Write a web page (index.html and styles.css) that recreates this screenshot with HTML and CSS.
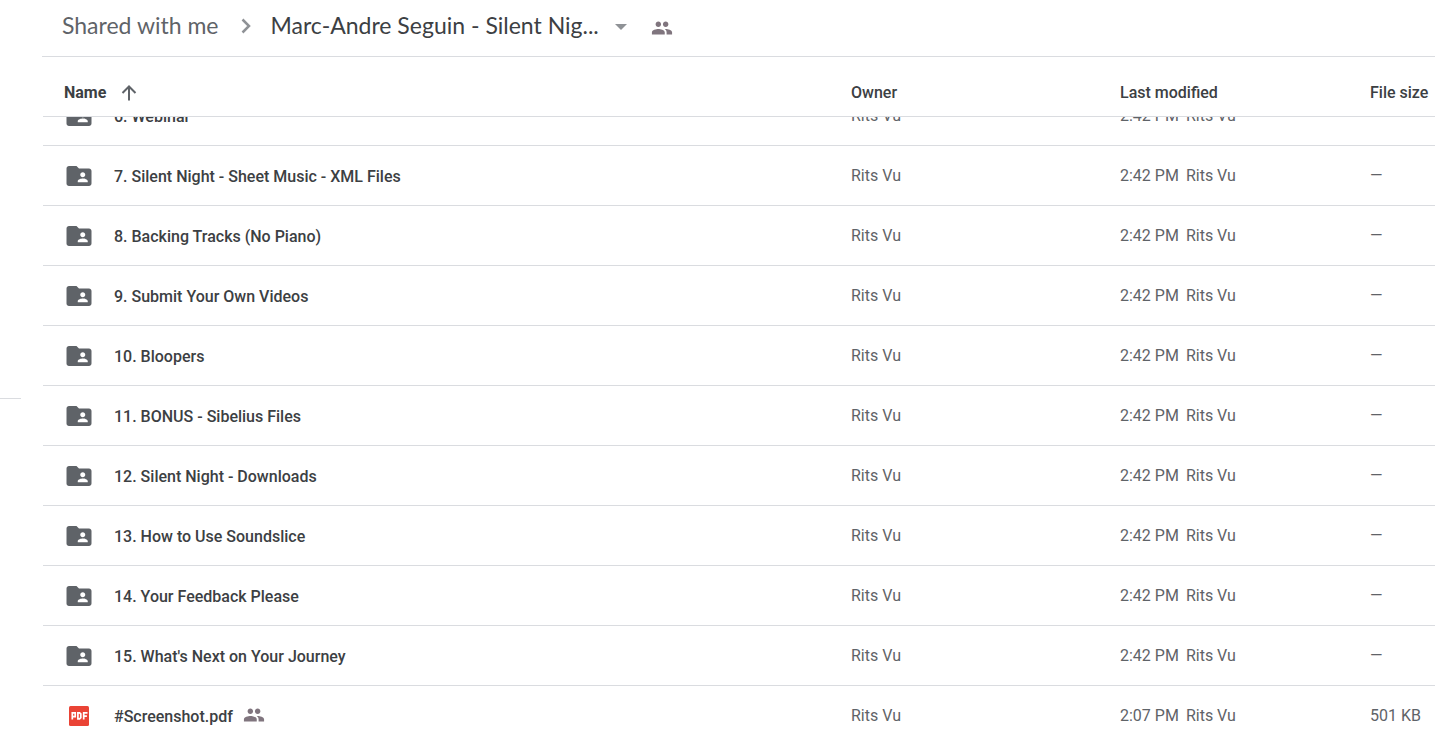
FILE: index.html
```html
<!DOCTYPE html>
<html lang="en">
<head>
<meta charset="utf-8">
<title>Marc-Andre Seguin - Silent Night</title>
<link rel="stylesheet" href="styles.css">
</head>
<body>
<svg class="sprite" aria-hidden="true">
  <symbol id="folder-shared" viewBox="0 0 24 24"><path d="M20 6h-8l-2-2H4c-1.100 0-1.990.9-1.990 2L2 18c0 1.100.9 2 2 2h16c1.100 0 2-.9 2-2V8c0-1.100-.9-2-2-2zm-5 3c1.100 0 2 .9 2 2s-.9 2-2 2-2-.9-2-2 .9-2 2-2zm4 8h-8v-1c0-1.330 2.670-2 4-2s4 .67 4 2v1z"/></symbol>
  <symbol id="people" viewBox="0 0 24 24"><path d="M16 11c1.660 0 2.990-1.340 2.990-3S17.660 5 16 5s-3 1.340-3 3 1.340 3 3 3zm-8 0c1.660 0 2.990-1.340 2.990-3S9.660 5 8 5 5 6.340 5 8s1.340 3 3 3zm0 2c-2.330 0-7 1.170-7 3.500V19h14v-2.500c0-2.330-4.670-3.500-7-3.500zm8 0c-.29 0-.62.02-.97.05 1.160.84 1.970 1.970 1.970 3.450V19h6v-2.500c0-2.330-4.670-3.500-7-3.500z"/></symbol>
</svg>
<aside class="side"><hr class="side-rule"></aside>
<main class="main">
  <nav class="crumbs" aria-label="Breadcrumb">
    <a class="crumb" href="#">Shared with me</a>
    <svg class="chevron" viewBox="0 0 10 16" aria-hidden="true"><path d="M1.500 1.500 8 8l-6.500 6.500"/></svg>
    <button class="crumb-current" type="button">Marc-Andre Seguin - Silent Nig...
      <svg class="caret" viewBox="0 0 12 6" aria-hidden="true"><path d="M0 0h12L6 6z"/></svg>
    </button>
    <button class="share" type="button" aria-label="Manage people"><svg class="people" aria-hidden="true"><use href="#people"/></svg></button>
  </nav>
  <table class="files">
    <thead>
      <tr>
        <th scope="col"><button class="sort" type="button">Name
          <svg class="arrow" viewBox="0 0 16 16" aria-hidden="true"><path d="M8 15.500V2M1.500 8 8 1.500 14.500 8"/></svg></button></th>
        <th scope="col">Owner</th><th scope="col">Last modified</th><th scope="col">File size</th>
      </tr>
    </thead>
    <tbody>
      <tr><td><svg class="icon"><use href="#folder-shared"/></svg><span class="name">6. Webinar</span></td><td>Rits Vu</td><td><span>2:42 PM</span><span>Rits Vu</span></td><td>—</td></tr>
      <tr><td><svg class="icon"><use href="#folder-shared"/></svg><span class="name">7. Silent Night - Sheet Music - XML Files</span></td><td>Rits Vu</td><td><span>2:42 PM</span><span>Rits Vu</span></td><td>—</td></tr>
      <tr><td><svg class="icon"><use href="#folder-shared"/></svg><span class="name">8. Backing Tracks (No Piano)</span></td><td>Rits Vu</td><td><span>2:42 PM</span><span>Rits Vu</span></td><td>—</td></tr>
      <tr><td><svg class="icon"><use href="#folder-shared"/></svg><span class="name">9. Submit Your Own Videos</span></td><td>Rits Vu</td><td><span>2:42 PM</span><span>Rits Vu</span></td><td>—</td></tr>
      <tr><td><svg class="icon"><use href="#folder-shared"/></svg><span class="name">10. Bloopers</span></td><td>Rits Vu</td><td><span>2:42 PM</span><span>Rits Vu</span></td><td>—</td></tr>
      <tr><td><svg class="icon"><use href="#folder-shared"/></svg><span class="name">11. BONUS - Sibelius Files</span></td><td>Rits Vu</td><td><span>2:42 PM</span><span>Rits Vu</span></td><td>—</td></tr>
      <tr><td><svg class="icon"><use href="#folder-shared"/></svg><span class="name">12. Silent Night - Downloads</span></td><td>Rits Vu</td><td><span>2:42 PM</span><span>Rits Vu</span></td><td>—</td></tr>
      <tr><td><svg class="icon"><use href="#folder-shared"/></svg><span class="name">13. How to Use Soundslice</span></td><td>Rits Vu</td><td><span>2:42 PM</span><span>Rits Vu</span></td><td>—</td></tr>
      <tr><td><svg class="icon"><use href="#folder-shared"/></svg><span class="name">14. Your Feedback Please</span></td><td>Rits Vu</td><td><span>2:42 PM</span><span>Rits Vu</span></td><td>—</td></tr>
      <tr><td><svg class="icon"><use href="#folder-shared"/></svg><span class="name">15. What's Next on Your Journey</span></td><td>Rits Vu</td><td><span>2:42 PM</span><span>Rits Vu</span></td><td>—</td></tr>
      <tr><td><svg class="icon" viewBox="0 0 30 30"><rect x="5" y="5" width="20" height="20" rx="1.500" fill="#ea4335"/><g fill="none" stroke="#fff" stroke-width="1.700"><path d="M8.300 18.600v-6.800h2.900v3.900H8.300M13.900 11.800h1.700l1.200 1.100v3.800l-1.200 1.100h-1.700zM19.700 18.600v-6.800h3.800M19.700 15.200h3.200"/></g></svg><span class="name">#Screenshot.pdf</span><svg class="people shared"><use href="#people"/></svg></td><td>Rits Vu</td><td><span>2:07 PM</span><span>Rits Vu</span></td><td>501 KB</td></tr>
    </tbody>
  </table>
</main>
</body>
</html>
```
FILE: styles.css
```css
* { box-sizing: border-box; }

body {
  margin: 0;
  height: 100vh;
  display: flex;
  overflow: hidden;
  background: #fff;
  color: #3c4043;
  font: 16px/24px Roboto, "Liberation Sans", sans-serif;
}

button {
  border: 0;
  padding: 0;
  background: none;
  color: inherit;
  font: inherit;
  cursor: pointer;
}

svg { flex: none; fill: currentColor; }
.sprite { display: none; }

.side { flex: 0 0 42px; padding-top: 398px; }
.side-rule { width: 21px; margin: 0; border: 0; border-top: 1px solid #dadce0; }

.main { flex: 1; min-width: 0; display: flex; flex-direction: column; }

.crumbs {
  display: flex;
  align-items: center;
  height: 57px;
  padding: 0 20px 6px;
  border-bottom: 1px solid #dadce0;
  font: 23px/32px Lato, "Open Sans", sans-serif;
  white-space: nowrap;
}
.crumb { color: #5f6368; text-decoration: none; }
.chevron {
  width: 10px;
  height: 16px;
  margin: 2px 20px 0 22px;
  fill: none;
  stroke: #8f9296;
  stroke-width: 2.500;
}
.crumb-current { display: flex; align-items: center; gap: 16px; }
.caret { width: 12px; height: 6px; margin-top: 3px; color: #8f9296; }
.share { display: flex; margin: 6px 0 0 24px; color: #80757e; }
.people { width: 22px; height: 22px; }

.files { flex: 1; min-height: 0; display: flex; flex-direction: column; margin-left: 1px; }
thead { display: block; flex: none; border-bottom: 1px solid #dadce0; }
tbody { display: block; flex: 1; min-height: 0; overflow: hidden; }
tr {
  display: grid;
  grid-template-columns: minmax(0, 1fr) 269px 250px 65px;
  height: 60px;
  padding-left: 21px;
}
th, td { display: flex; align-items: center; padding: 0; white-space: nowrap; }
th { font-weight: 500; text-align: left; padding-top: 12px; }
th:first-child { font-weight: 700; }
thead tr { height: 59px; }
.sort { display: flex; align-items: center; gap: 15px; }
.arrow { width: 16px; height: 16px; fill: none; stroke: #5f6368; stroke-width: 2; }

/* The list is scrolled so that its first row is half under the header. */
tbody tr:first-child { margin-top: -31px; }
tbody tr { border-bottom: 1px solid #dadce0; }
tbody tr:last-child { border-bottom: 0; }
td { color: #5f6368; }
td:first-child { color: #3c4043; font-weight: 500; }
td:nth-child(3) { gap: 7px; }
.icon { width: 30px; height: 30px; margin-right: 20px; color: #5f6368; }
.name { padding-top: 2px; }
.shared { margin: 0 0 2px 10px; color: #80757e; }
```
